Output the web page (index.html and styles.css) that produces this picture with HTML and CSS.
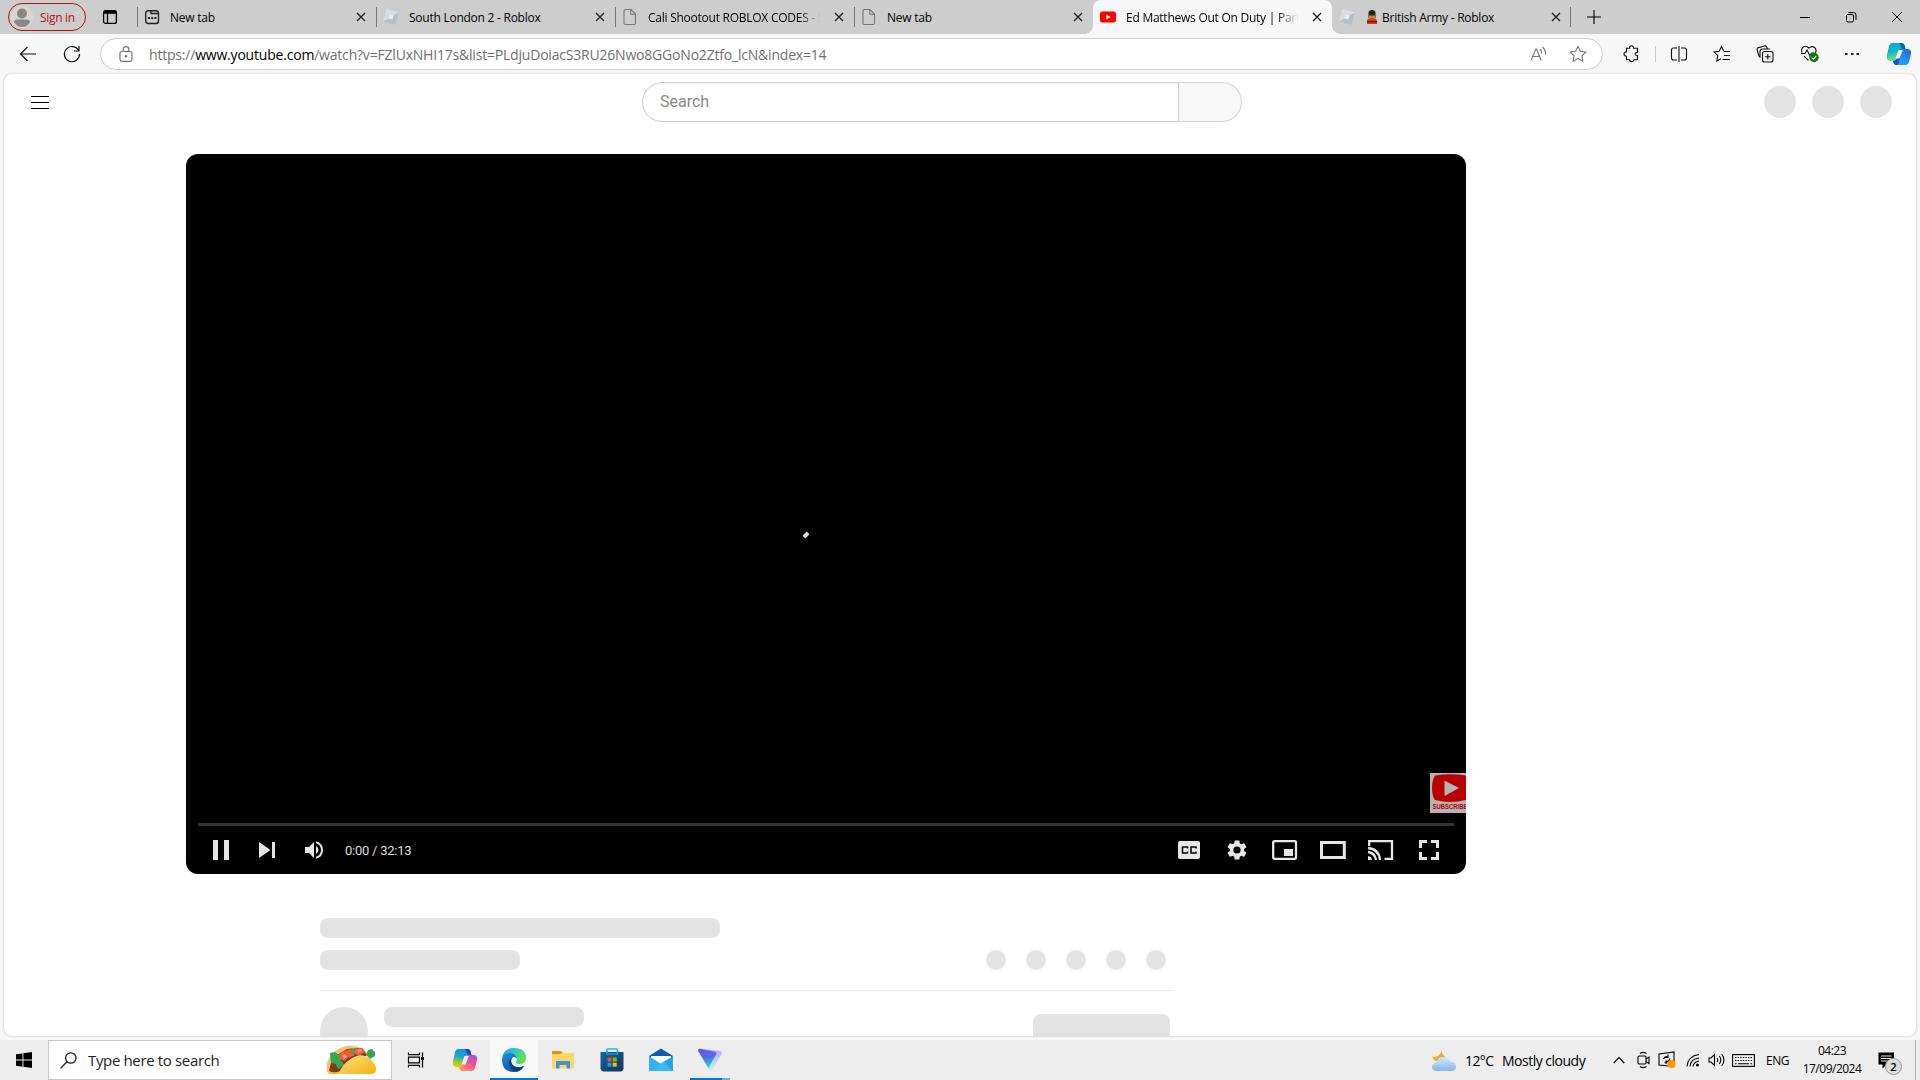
FILE: index.html
```html
<!DOCTYPE html>
<html lang="en">

<head>
    <meta charset="UTF-8">
    <title>Ed Matthews Out On Duty | Part 2</title>
    <link rel="stylesheet" href="styles.css">
</head>

<body>

    <!-- Tab strip -->
    <div class="tabstrip">
        <div class="signin">
            <svg width="22" height="22" viewBox="0 0 22 22"><circle cx="11" cy="11" r="11" fill="#d8d6d3"/><circle cx="11" cy="7.5" r="5" fill="#8b8783"/><path d="M3 16q0-2.500 3-2.500h10q3 0 3 2.500-2.500 5-8 5t-8-5z" fill="#8b8783"/></svg>
            <span>Sign in</span>
        </div>
        <div class="tab-actions">
            <svg width="16" height="16" viewBox="0 0 16 16" fill="none" stroke="#000" stroke-width="1.300"><rect x="1.600" y="1.600" width="12.800" height="12.800" rx="2"/><path d="M2 3.300h12" stroke-width="3"/><path d="M5.500 4v10"/></svg>
        </div>
        <div class="tab">
            <svg class="favicon" width="16" height="16" viewBox="0 0 16 16" fill="none" stroke="#222" stroke-width="1.400"><rect x="1.700" y="1.700" width="12.800" height="12.800" rx="2.500"/><path d="M7 2v2.500h7.500"/><path d="M4 9h2M7.200 9h2M10.400 9h2" stroke-width="2"/></svg>
            <span class="tab-title t-new">New tab</span>
            <svg class="close" width="10" height="10" viewBox="0 0 10 10"><path d="M1 1l8 8M9 1L1 9"/></svg>
        </div>
        <div class="tab">
            <svg class="favicon" width="16" height="16" viewBox="0 0 16 16"><path d="M3.500 0L16 3.500 12.500 16 0 12.500z" fill="#d9dde1"/><path d="M0 12.500L16 3.500 12.500 16z" fill="#b9bec5"/><path d="M6.500 5.600l4 1-1 4-4-1z" fill="#eceff1"/></svg>
            <span class="tab-title t-south">South London 2 - Roblox</span>
            <svg class="close" width="10" height="10" viewBox="0 0 10 10"><path d="M1 1l8 8M9 1L1 9"/></svg>
        </div>
        <div class="tab">
            <svg class="favicon" width="16" height="16" viewBox="0 0 16 16" fill="none" stroke="#777" stroke-width="1.100"><path d="M3.500.500H9L13.500 5v9q0 1.500-1.500 1.500H3.500Q2 15.500 2 14V2Q2 .500 3.500.500zM8.700.500V5.300h4.800"/></svg>
            <span class="tab-title faded t-cali">Cali Shootout ROBLOX CODES - South</span>
            <svg class="close" width="10" height="10" viewBox="0 0 10 10"><path d="M1 1l8 8M9 1L1 9"/></svg>
        </div>
        <div class="tab">
            <svg class="favicon" width="16" height="16" viewBox="0 0 16 16" fill="none" stroke="#777" stroke-width="1.100"><path d="M3.500.500H9L13.500 5v9q0 1.500-1.500 1.500H3.500Q2 15.500 2 14V2Q2 .500 3.500.500zM8.700.500V5.300h4.800"/></svg>
            <span class="tab-title t-new">New tab</span>
            <svg class="close" width="10" height="10" viewBox="0 0 10 10"><path d="M1 1l8 8M9 1L1 9"/></svg>
        </div>
        <div class="tab active">
            <svg class="favicon" width="16" height="16" viewBox="0 0 16 16"><rect y="2.500" width="16" height="11" rx="2.500" fill="#f00"/><path d="M6.300 5.500L10.700 8l-4.400 2.500z" fill="#fff"/></svg>
            <span class="tab-title faded t-ed">Ed Matthews Out On Duty | Part 2 - YouTube</span>
            <svg class="close" width="10" height="10" viewBox="0 0 10 10"><path d="M1 1l8 8M9 1L1 9"/></svg>
        </div>
        <div class="tab">
            <svg class="favicon" width="16" height="16" viewBox="0 0 16 16"><path d="M3.500 0L16 3.500 12.500 16 0 12.500z" fill="#d9dde1"/><path d="M0 12.500L16 3.500 12.500 16z" fill="#b9bec5"/><path d="M6.500 5.600l4 1-1 4-4-1z" fill="#eceff1"/></svg>
            <svg class="guard" width="12" height="14" viewBox="0 0 12 14"><path d="M2.500 8V3Q2.500 0 6 0t3.500 3v5z" fill="#222"/><path d="M3 5.500h6V8H3z" fill="#c58a2c"/><path d="M1 14v-3q0-3 5-3t5 3v3z" fill="#e0331c"/><path d="M1 11.300h10v1H1z" fill="#222"/></svg>
            <span class="tab-title t-army">British Army - Roblox</span>
            <svg class="close" width="10" height="10" viewBox="0 0 10 10"><path d="M1 1l8 8M9 1L1 9"/></svg>
        </div>
        <svg class="new-tab" width="14" height="14" viewBox="0 0 14 14"><path d="M7 0v14M0 7h14" stroke="#000" stroke-width="1.100"/></svg>
        <div class="window-buttons">
            <svg width="46" height="34" viewBox="0 0 46 34"><path d="M18 17.500h10"/></svg>
            <svg width="46" height="34" viewBox="0 0 46 34"><rect x="18.500" y="14.500" width="7" height="7.500" rx="1.500"/><path d="M20.500 12.500h5q2.500 0 2.500 2.500v5"/></svg>
            <svg width="46" height="34" viewBox="0 0 46 34"><path d="M18 12l10 10M28 12L18 22"/></svg>
        </div>
    </div>

    <!-- Toolbar -->
    <div class="toolbar">
        <svg class="back" width="18" height="16" viewBox="0 0 18 16"><path d="M17 8H1.500M8.500 1L1.500 8l7 7"/></svg>
        <svg class="reload" width="18" height="18" viewBox="0 0 18 18"><path d="M15.700 5.500A7.600 7.600 0 1 0 16.600 9M16 1v5h-5"/></svg>
        <div class="address">
            <svg width="14" height="16" viewBox="0 0 14 16" fill="none" stroke="#777" stroke-width="1.200"><rect x="1" y="5.500" width="12" height="9.800" rx="1.800"/><path d="M4.200 5.500V3.300q0-2.600 2.800-2.600t2.800 2.600v2.200"/><circle cx="7" cy="10.300" r=".7" fill="#666"/></svg>
            <span class="url"><span class="u1">https://</span><span class="host">www.youtube.com</span><span class="u2">/watch?v=FZlUxNHI17s&amp;list=PLdjuDoiacS3RU26Nwo8GGoNo2Ztfo_lcN&amp;index=14</span></span>
            <svg class="read" width="17" height="16" viewBox="0 0 17 16" fill="none" stroke="#777" stroke-width="1.100"><path d="M1 14.500L5.800 3h.6l4.800 11.500M2.800 10.500h6.600M10 3q1.800 1.600 1.500 4.500M12.500 1q3.500 3 3 7.500"/></svg>
            <svg class="star" width="18" height="18" viewBox="0 0 18 18" fill="none" stroke="#777" stroke-width="1.100" stroke-linejoin="round"><path d="M9 1.300l2.400 5 5.500.7-4 3.800 1 5.500L9 13.600l-4.900 2.700 1-5.500-4-3.800 5.500-.7z"/></svg>
        </div>
        <div class="tools">
            <svg width="18" height="18" viewBox="0 0 18 18"><path d="M4 3.500h3.200q-.2-2.500 1.900-2.500t1.900 2.500H15v4.200q-2.300-.2-2.300 1.500T15 10.800V15h-3.500q-.2 2-2.300 2T7 15H4v-3.500Q1.500 11.500 1.500 9.300T4 7.200z" transform="translate(.5 -.3)"/></svg>
            <div class="divider"></div>
            <svg width="18" height="18" viewBox="0 0 18 18"><path d="M7 3H3.500Q1.500 3 1.500 5v8q0 2 2 2H7M11 3h3.500q2 0 2 2v8q0 2-2 2H11M9 1v16"/></svg>
            <svg width="18" height="18" viewBox="0 0 18 18"><path d="M10.800 6.200L8.500 1.500l-2.300 4.700-5.200.8 3.800 3.600-1 5.400L8 13.700M11 6.500h6M11 10.500h6M9.500 14.500H17"/></svg>
            <svg width="18" height="18" viewBox="0 0 18 18"><rect x="6.500" y="6.500" width="10.500" height="10.500" rx="2"/><path d="M11.800 9v5.500M9 11.800h5.500M4.500 12.500Q3 12 2.700 10.500L1.200 5Q.8 3.200 2.500 2.600L8.500 1q1.800-.4 2.400 1.300l.6 2M4 12V6.500Q4 4 6.500 4H14"/></svg>
            <svg width="20" height="18" viewBox="0 0 20 18"><path d="M16.500 8Q18 4.500 15.500 2.500T10 3Q7 0 4.300 2T3 7.500M2 8.500h4l2-3.500 3 6 1.500-3h3M5 11l4.500 4.500"/><circle cx="15" cy="12.500" r="4.700" fill="#107c10" stroke="none"/><path d="M12.800 12.600l1.600 1.500 2.800-3" stroke="#fff"/></svg>
            <svg width="18" height="18" viewBox="0 0 18 18"><path d="M2 8h2.500v2H2zM8 8h2.500v2H8zM13.500 8H16v2h-2.500z" fill="#222" stroke="none"/></svg>
            <svg class="copilot" width="26" height="24" viewBox="0 0 26 24">
                <defs>
                    <linearGradient id="cp1" x1="0" y1="0" x2=".2" y2="1"><stop offset="0" stop-color="#0ea5dd"/><stop offset=".5" stop-color="#10b4c8"/><stop offset="1" stop-color="#74e08d"/></linearGradient>
                    <linearGradient id="cp2" x1="1" y1="0" x2="0" y2="1"><stop offset="0" stop-color="#1e6ad8"/><stop offset="1" stop-color="#2bb4fb"/></linearGradient>
                </defs>
                <path d="M6 1h9.500q2.500 0 3.300 3l.7 3H16q-2 0-2.700 2L11 16q-1 3-4 3H5q-5 0-4-6L3 4q.8-3 3-3z" fill="url(#cp1)"/>
                <path d="M13 1h2.500q2.500 0 3.300 3l.7 3H16z" fill="#0868a8"/>
                <path d="M20 23h-9.500q-2.500 0-3.300-3l-.3-1Q10 19 11 16l2.500-7Q14 7 16 7h5q5 0 4 5l-2 8q-.8 3-3 3z" fill="url(#cp2)"/>
                <path d="M7 19q3 0 4-3l2.500-8.300L16 7l-3 13q-.5 3-2.500 3t-3-2z" fill="#1253ce"/>
                <path d="M12.500 8h4.300l-3.300 8.500H9.500z" fill="#f7f7f7"/>
            </svg>
        </div>
    </div>

    <!-- Page -->
    <div class="page">
        <div class="masthead">
            <div class="menu"><i></i><i></i><i></i></div>
            <div class="searchbox">
                <div class="search-input">Search</div>
                <div class="search-button"></div>
            </div>
            <div class="masthead-end"><i></i><i></i><i></i></div>
        </div>

        <div class="player">
            <div class="spinner"></div>
            <svg class="watermark" width="36" height="40" viewBox="0 0 36 40"><rect width="40" height="40" fill="#b4b4b4"/><path d="M5 2.500Q20 0 36 2.500V27Q20 31 5 27 2 23 2 15T5 2.500z" fill="#b80000"/><path d="M14.500 7.500L29 15l-14.500 8z" fill="#b4b4b4"/><text x="2.500" y="36" textLength="35" lengthAdjust="spacingAndGlyphs">SUBSCRIBE</text></svg>
            <div class="controls">
                <div class="progress"></div>
                <div class="buttons">
                    <svg width="46" height="36" viewBox="0 0 46 36"><path d="M15 8h5v20h-5zM26 8h5v20h-5z"/></svg>
                    <svg width="46" height="36" viewBox="0 0 46 36"><path d="M15 10v16l11.500-8zM28 10h3v16h-3z"/></svg>
                    <svg width="46" height="36" viewBox="0 0 46 36"><path d="M15 15v6h4l5 5V10l-5 5zM26 14v8q2.500-1.300 2.500-4T26 14zM26 9.200v2.100q5 1.700 5 6.700t-5 6.700v2.100q7-2 7-8.800t-7-8.800z"/></svg>
                    <span class="time">0:00 / 32:13</span>
                    <div class="gap"></div>
                    <svg width="48" height="36" viewBox="0 0 48 36"><path d="M15 9h18q2 0 2 2v14q0 2-2 2H15q-2 0-2-2V11q0-2 2-2z"/><path d="M22.500 16.500v-1.600h-5v6.200h5v-1.600M31 16.500v-1.600h-5v6.200h5v-1.600" fill="none" stroke="#000" stroke-width="1.500"/></svg>
                    <svg width="48" height="36" viewBox="0 0 48 36"><g transform="translate(12 6)"><path d="M19.140 12.940c.04-.3.060-.61.060-.94s-.02-.64-.07-.94l2.030-1.580c.18-.14.230-.41.120-.61l-1.920-3.320c-.12-.22-.37-.29-.59-.22l-2.390.96c-.5-.38-1.030-.7-1.620-.94L14.400 2.810c-.04-.24-.24-.41-.48-.41h-3.840c-.24 0-.43.17-.47.41l-.36 2.540c-.59.24-1.130.57-1.620.94l-2.390-.96c-.22-.08-.47 0-.59.22L2.740 8.870c-.12.210-.08.470.12.610l2.030 1.580c-.05.3-.09.630-.09.940s.02.640.070.940l-2.030 1.580c-.18.140-.23.410-.12.610l1.920 3.320c.12.220.37.290.59.220l2.390-.96c.5.380 1.030.7 1.620.94l.36 2.540c.05.240.24.410.48.410h3.840c.24 0 .44-.17.470-.41l.36-2.540c.59-.24 1.130-.56 1.620-.94l2.390.96c.22.080.47 0 .59-.22l1.920-3.320c.12-.22.070-.47-.12-.61zM12 15.600A3.600 3.600 0 1 1 12 8.400a3.600 3.600 0 0 1 0 7.200z"/></g></svg>
                    <svg width="48" height="36" viewBox="0 0 48 36"><rect x="12.200" y="9.200" width="22.800" height="17.600" rx="1.500" class="line"/><path d="M23 17h9v7h-9z"/></svg>
                    <svg width="48" height="36" viewBox="0 0 48 36"><path d="M12.500 10.500h22.800v15H12.500z" class="line thick"/></svg>
                    <svg width="48" height="36" viewBox="0 0 48 36"><path d="M12.200 14V9.200H35v17.600h-7.500M11 16q11 1 12 12M11 20q7 1 8 8" class="line"/><path d="M11 24q3.700.5 4 4h-4z"/></svg>
                    <svg width="48" height="36" viewBox="0 0 48 36"><path d="M15.500 16V9.500H22M26 9.500h6.500V16M32.500 20v6.500H26M22 26.500h-6.500V20" class="line thick"/></svg>
                </div>
            </div>
        </div>

        <div class="below">
            <div class="bar wide"></div>
            <div class="row">
                <div class="bar"></div>
                <div class="dots"><i></i><i></i><i></i><i></i><i></i></div>
            </div>
            <div class="owner">
                <div class="avatar"></div>
                <div class="bar"></div>
                <div class="subscribe"></div>
            </div>
        </div>
    </div>

    <!-- Taskbar -->
    <div class="taskbar">
        <div class="start">
            <svg width="16" height="16" viewBox="0 0 16 16"><path d="M0 2.300L6.500 1.400v6.200H0zM7.400 1.200L16 0v7.600H7.400zM0 8.500h6.500v6.200L0 13.700zM7.400 8.500H16V16l-8.600-1.200z"/></svg>
        </div>
        <div class="tasksearch">
            <svg width="17" height="17" viewBox="0 0 17 17" fill="none" stroke="#222" stroke-width="1.300"><circle cx="10.800" cy="6" r="5.200"/><path d="M7 9.800L.6 16.300"/></svg>
            <span>Type here to search</span>
            <svg class="taco" width="52" height="30" viewBox="0 0 52 30">
                <defs><linearGradient id="shell" x1="0" y1="0" x2="1" y2="1"><stop offset="0" stop-color="#ffdf83"/><stop offset="1" stop-color="#f5b210"/></linearGradient></defs>
                <path d="M2 27Q0 14 10 6 24-4 39 4l4 6-30 18H6q-3 0-4-1z" fill="#f0c477"/>
                <path d="M4 26l3-13L22 4l15-1 5 7-25 16q-7 3-13 0z" fill="#7b4018"/>
                <path d="M5 8l5-1 4 3 3 4-5 5-6-1zM10 17l7-1 2 4-6 4zM25 3l6 2-2 6-6-1zM43 5l4-1 3 3v4l-5 3-4-4z" fill="#34a853"/>
                <path d="M14 9l6-4 5 5-5 6-5-2zM21 6l4-2 4 6-5 3zM30 4l7-1 3 4-6 4-4-2z" fill="#ee5b3d"/>
                <path d="M17 11l3-2 2 3-3 2zM32 5l4-1 1 2-4 2z" fill="#ff9873"/>
                <path d="M14 29Q16 20 27 13q10-6 18 1 7 6 6 12-1 3-5 3z" fill="url(#shell)"/>
                <path d="M3 27q8 2 12-1l-1 3H6q-3 0-3-2z" fill="#f7bc30"/>
            </svg>
        </div>
        <div class="app">
            <svg width="18" height="16" viewBox="0 0 18 16" fill="none" stroke="#000" stroke-width="1.200"><path d="M1.500.5v2.200h11V.5M1.500 15.500v-2.200h11v2.200M1.500 5.200h11v5.600h-11zM15.500.5v15"/><path d="M14 5h3v3h-3z" fill="#000" stroke="none"/></svg>
        </div>
        <div class="app">
            <svg width="26" height="24" viewBox="0 0 26 24">
                <defs>
                    <linearGradient id="cc1" x1=".5" y1="0" x2=".3" y2="1"><stop offset="0" stop-color="#1690dd"/><stop offset=".45" stop-color="#21a8c8"/><stop offset=".7" stop-color="#8cc63e"/><stop offset="1" stop-color="#ffc400"/></linearGradient>
                    <linearGradient id="cc2" x1="1" y1="0" x2=".2" y2="1"><stop offset="0" stop-color="#a24de0"/><stop offset=".5" stop-color="#ee5594"/><stop offset="1" stop-color="#ff9c55"/></linearGradient>
                </defs>
                <path d="M6 1h9.500q2.500 0 3.300 3l.7 3H16q-2 0-2.700 2L11 16q-1 3-4 3H5q-5 0-4-6L3 4q.8-3 3-3z" fill="url(#cc1)"/>
                <path d="M13 1h2.500q2.500 0 3.300 3l.7 3H16z" fill="#2146c4"/>
                <path d="M20 23h-9.500q-2.500 0-3.300-3l-.3-1Q10 19 11 16l2.500-7Q14 7 16 7h5q5 0 4 5l-2 8q-.8 3-3 3z" fill="url(#cc2)"/>
                <path d="M12.500 8h4.300l-3.300 8.500H9.500z" fill="#eee"/>
            </svg>
        </div>
        <div class="app current">
            <svg width="24" height="24" viewBox="0 0 24 24">
                <defs>
                    <linearGradient id="ed1" x1="0" y1="0" x2="1" y2=".3"><stop offset="0" stop-color="#239fdf"/><stop offset=".5" stop-color="#2bc3d2"/><stop offset="1" stop-color="#67df55"/></linearGradient>
                    <linearGradient id="ed2" x1="0" y1="0" x2=".7" y2="1"><stop offset="0" stop-color="#1c91de"/><stop offset="1" stop-color="#0b4f9c"/></linearGradient>
                </defs>
                <path d="M0 12Q0 0 12 0t12 10q0 6-6.500 6-4 0-4-2 1.500-1 1.300-3Q14 8 10 8 5 7 0 12z" fill="url(#ed1)"/>
                <path d="M0 12Q1 5 7.500 5q6 0 7.300 5.500Q12.500 8 10 10q-2.500 3 .5 7 4 4 11.500 1-3.500 6-10 6Q0 24 0 12z" fill="url(#ed2)"/>
                <path d="M10 10q-4 2-3 7 2 6 8.500 6.500 4-1 6.500-5.500-7 3-11.300-1Q8 13 10 10z" fill="#0a437f"/>
            </svg>
        </div>
        <div class="app">
            <svg width="22" height="20" viewBox="0 0 22 20"><path d="M0 1h9l2 2h11v15.500H0z" fill="#ffd767"/><path d="M0 1h9l1.500 1.500L8.500 4H0z" fill="#d89a12"/><path d="M4 18.500V12q0-1 1-1h12q1 0 1 1v6.500h-3.500V15h-7v3.500z" fill="#3b93dc"/></svg>
        </div>
        <div class="app">
            <svg width="24" height="24" viewBox="0 0 24 24"><defs><linearGradient id="st" x1="0" y1="0" x2="1" y2="1"><stop offset="0" stop-color="#14689f"/><stop offset="1" stop-color="#183059"/></linearGradient></defs><path d="M7 6V2q0-1 1-1h8.500q1 0 1 1v4" fill="none" stroke="#22b4ee" stroke-width="1.700"/><path d="M.5 4h23v16q0 3.500-3.500 3.500H4Q.5 23.500.5 20z" fill="url(#st)"/><path d="M7 3v3h10.500V3" fill="none" stroke="#22b4ee" stroke-width="1.200"/><path d="M7.500 9.500h4v4h-4z" fill="#f25022"/><path d="M12.700 9.500h4v4h-4z" fill="#7fba00"/><path d="M7.500 14.700h4v4h-4z" fill="#00a4ef"/><path d="M12.700 14.700h4v4h-4z" fill="#ffb900"/></svg>
        </div>
        <div class="app">
            <svg width="24" height="24" viewBox="0 0 24 24"><path d="M0 8l12-7.500L24 8v15H0z" fill="#0f5ea8"/><path d="M2 8h20v9H2z" fill="#fff"/><path d="M0 8l12 8L0 23z" fill="#33b3ec"/><path d="M24 8v15H0z" fill="#26a5e5"/><path d="M0 23l15-9.300L24 23z" fill="#35baf1"/></svg>
        </div>
        <div class="app open">
            <svg width="24" height="24" viewBox="0 0 24 24"><defs><linearGradient id="pr" x1=".2" y1="0" x2=".5" y2="1"><stop offset="0" stop-color="#6a4df3"/><stop offset=".5" stop-color="#5470df"/><stop offset="1" stop-color="#22ddc4"/></linearGradient><linearGradient id="pr2" x1="0" y1="0" x2="0" y2="1"><stop offset="0" stop-color="#b9a7ff"/><stop offset="1" stop-color="#bff5e7"/></linearGradient></defs><path d="M2 .5L22 3q3 .6 1.500 3.500L14 22q-1.500 2-3 0L0 2.500Q0 .3 2 .5z" fill="url(#pr2)"/><path d="M1 .8l16 3q2.500.7 1 3L10.500 20 0 2.800Q0 1 1 .8z" fill="url(#pr)"/></svg>
        </div>
        <div class="tray">
            <svg class="weather" width="26" height="26" viewBox="0 0 26 26"><defs><linearGradient id="cl" x1="0" y1="0" x2="0" y2="1"><stop offset="0" stop-color="#d4e8fc"/><stop offset="1" stop-color="#88b4ef"/></linearGradient></defs><path d="M11 1q-1 4 1.500 7t3.500 6H4q-2-2-3-5 3 2 6.500-.5T11 1z" fill="#f8a92a"/><path d="M6 24q-5 0-5-4t5-5q1-5 6.500-5 5 0 6.500 4.500 6 .5 6 5T20 24z" fill="url(#cl)"/></svg>
            <span class="temp">12°C</span>
            <span class="sky">Mostly cloudy</span>
            <svg class="chev" width="12" height="8" viewBox="0 0 12 8"><path d="M.7 7L6 1.500 11.300 7"/></svg>
            <svg class="meet" width="13" height="18" viewBox="0 0 13 18"><rect x="1" y="5" width="8" height="8" rx="1.200"/><path d="M9 8l3-2v6.500L9 10.500M3 2.500Q6 .2 9.500 2.500M3 15.500q3 2.300 6.500 0"/></svg>
            <svg class="sync" width="18" height="18" viewBox="0 0 18 18"><path d="M1 3l15-2v14.500L1 14zM5.500 8q1-3 5-2.500M10 3.500v3H7M11.500 7.500q0 4-5 4M8 13v-3h3"/><circle cx="13.500" cy="13" r="4" fill="#ff9500" stroke="none"/></svg>
            <svg class="wifi" width="14" height="14" viewBox="0 0 14 14"><path d="M1 13.500Q2 3 13 1.500M4 13.500Q4.500 6 13 5M7 13.500Q7.500 9 13 8"/><circle cx="11.500" cy="12" r="1.500" fill="#000" stroke="none"/></svg>
            <svg class="vol" width="17" height="14" viewBox="0 0 17 14"><path d="M1 5v4h2l3.500 3.500v-11L3 5zM9 5q1.500 2 0 4M11.300 3q3 4 0 8M13.700 1.200q4.500 5.800 0 11.600"/></svg>
            <svg class="kbd" width="23" height="13" viewBox="0 0 23 13"><rect x=".6" y=".6" width="21.800" height="11.800"/><path d="M3 3.500h17M3 6.500h17" stroke-dasharray="1.400 1.200"/><path d="M3 9.700h1.500M6 9.700h11M18.500 9.700H20"/></svg>
            <span class="lang">ENG</span>
            <div class="clock"><div>04:23</div><div class="date">17/09/2024</div></div>
            <div class="notes">
                <svg width="17" height="17" viewBox="0 0 17 17"><path d="M.5.500h15.500v12H9L4.500 16.500v-4h-4z" fill="#000" stroke="none"/><path d="M3 4h10.500M3 6.500h10.500M3 9h7" stroke="#eee"/></svg>
                <span class="count">2</span>
            </div>
            <div class="peek"></div>
        </div>
    </div>

</body>

</html>
```
FILE: styles.css
```css
* {
    margin: 0;
    padding: 0;
    box-sizing: border-box;
}

body {
    width: 1920px;
    height: 1080px;
    overflow: hidden;
    background: #f7f7f7;
    font-family: 'Open Sans', 'Noto Sans', sans-serif;
    font-size: 12px;
    color: #000;
    display: flex;
    flex-direction: column;
}

svg {
    display: block;
    flex: none;
}

span {
    white-space: nowrap;
}

/* Tab strip */
.tabstrip {
    height: 34px;
    background: #cdcdcd;
    display: flex;
    align-items: center;
    padding-left: 8px;
}

.signin {
    width: 78px;
    height: 28px;
    border: 1px solid #b0141a;
    border-radius: 14px;
    display: flex;
    align-items: center;
    gap: 7px;
    padding-left: 2px;
    color: #b0141a;
    letter-spacing: -0.3px;
}

.tab-actions {
    width: 51px;
    padding-left: 16px;
}

.tab {
    width: 239px;
    height: 34px;
    display: flex;
    align-items: center;
    padding: 0 10px 0 7px;
    background: linear-gradient(#777, #777) left 0 top 7px / 1px 20px no-repeat;
}

.tab:nth-last-child(3) {
    background: linear-gradient(#777, #777) right 0 top 7px / 1px 20px no-repeat;
}

.tab.active {
    background: #f7f7f7;
    border-radius: 8px 8px 0 0;
    position: relative;
}

.tab.active::before,
.tab.active::after {
    content: '';
    position: absolute;
    bottom: 0;
    width: 8px;
    height: 8px;
}

.tab.active::before {
    left: -8px;
    background: radial-gradient(circle at 0 0, transparent 7.5px, #f7f7f7 8px);
}

.tab.active::after {
    right: -8px;
    background: radial-gradient(circle at 100% 0, transparent 7.5px, #f7f7f7 8px);
}

.favicon {
    margin-right: 10px;
}

.guard {
    margin: 0 4px 0 1px;
}

.tab-title {
    flex: 1;
    overflow: hidden;
    letter-spacing: -0.25px;
}

.faded {
    -webkit-mask-image: linear-gradient(90deg, #000 86%, transparent 98%);
    mask-image: linear-gradient(90deg, #000 86%, transparent 98%);
}

.close {
    margin-left: 10px;
    stroke: #222;
    stroke-width: 1.4;
}

.new-tab {
    margin-left: 16px;
}

.window-buttons {
    margin-left: auto;
    display: flex;
}

.window-buttons svg {
    fill: none;
    stroke: #000;
}

/* Toolbar */
.toolbar {
    height: 40px;
    display: flex;
    align-items: center;
    padding-left: 19px;
}

.back,
.reload {
    fill: none;
    stroke: #111;
    stroke-width: 1.2;
}

.reload {
    margin: 0 19px 0 26px;
}

.address {
    width: 1503px;
    height: 32px;
    border: 1px solid #cfcfcf;
    border-radius: 16px;
    background: #fff;
    display: flex;
    align-items: center;
    padding: 0 15px 0 18px;
}

.url {
    flex: 1;
    margin-left: 16px;
    font-size: 14px;
    color: #707070;
    letter-spacing: -0.2px;
}

.host {
    color: #000;
}

.star {
    margin-left: 22px;
}

.tools {
    flex: 1;
    display: flex;
    align-items: center;
    padding: 0 8px 0 19px;
    justify-content: space-between;
}

.tools svg {
    fill: none;
    stroke: #111;
    stroke-width: 1.1;
}

.tools .copilot {
    stroke: none;
}

.divider {
    width: 1px;
    height: 16px;
    margin: 0 -10px;
    background: #c9c9c9;
}

/* Page */
.page {
    height: 962px;
    margin: 0 4px 4px;
    background: #fff;
    border-radius: 8px;
    box-shadow: 0 0 2px rgba(0, 0, 0, 0.3);
    overflow: hidden;
}

.masthead {
    height: 56px;
    display: flex;
    align-items: center;
    padding: 0 24px 0 27px;
}

.menu {
    width: 18px;
    display: flex;
    flex-direction: column;
    gap: 5px;
}

.menu i {
    height: 1px;
    background: #000;
}

.searchbox {
    width: 600px;
    height: 40px;
    margin-left: 593px;
    display: flex;
    font: 16px Roboto, sans-serif;
    color: #888;
}

.search-input {
    width: 537px;
    border: 1px solid #ccc;
    border-radius: 20px 0 0 20px;
    padding-left: 17px;
    line-height: 37px;
    box-shadow: inset 0 1px 2px #eee;
}

.search-button {
    flex: 1;
    border: 1px solid #d3d3d3;
    border-left: 0;
    border-radius: 0 20px 20px 0;
    background: #f8f8f8;
}

.masthead-end {
    margin-left: auto;
    display: flex;
    gap: 16px;
}

.masthead-end i {
    width: 32px;
    height: 32px;
    border-radius: 50%;
    background: #e3e3e3;
}

.player {
    width: 1280px;
    height: 720px;
    margin: 24px 0 0 182px;
    background: #000;
    border-radius: 12px;
    overflow: hidden;
    position: relative;
    display: flex;
    align-items: flex-end;
}

.spinner {
    position: absolute;
    left: 617px;
    top: 379px;
    width: 6px;
    height: 4px;
    border-radius: 1px;
    background: #ddd;
    transform: rotate(-45deg);
}

.watermark {
    position: absolute;
    right: 0;
    top: 619px;
}

.watermark text {
    font: bold 6.5px 'Liberation Sans', sans-serif;
    fill: #b80000;
}

.controls {
    width: 100%;
    padding: 0 12px;
}

.progress {
    height: 3px;
    background: #333;
}

.buttons {
    height: 48px;
    display: flex;
    align-items: center;
    padding-right: 1px;
}

.buttons svg {
    fill: #e6e6e6;
}

.buttons .line {
    fill: none;
    stroke: #e6e6e6;
    stroke-width: 2.3;
}

.buttons .thick {
    stroke-width: 3;
}

.time {
    margin-left: 9px;
    font: 13px Roboto, sans-serif;
    color: #ddd;
    letter-spacing: -0.25px;
}

.gap {
    flex: 1;
}

.below {
    width: 854px;
    margin: 44px 0 0 316px;
}

.bar {
    width: 200px;
    height: 20px;
    border-radius: 8px;
    background: #e3e3e3;
}

.bar.wide {
    width: 400px;
}

.row {
    display: flex;
    justify-content: space-between;
    margin-top: 12px;
    padding: 0 8px 20px 0;
    border-bottom: 1px solid #ebebeb;
}

.dots {
    display: flex;
    gap: 20px;
}

.dots i {
    width: 20px;
    height: 20px;
    border-radius: 50%;
    background: #e3e3e3;
}

.owner {
    display: flex;
    margin-top: 16px;
}

.avatar {
    width: 48px;
    height: 48px;
    margin-right: 16px;
    border-radius: 50%;
    background: #e3e3e3;
}

.subscribe {
    width: 137px;
    height: 36px;
    margin: 7px 4px 0 auto;
    border-radius: 8px;
    background: #e3e3e3;
}

/* Taskbar */
.taskbar {
    height: 40px;
    background: #ededed;
    display: flex;
}

.start {
    width: 48px;
    display: flex;
    align-items: center;
    justify-content: center;
}

.tasksearch {
    width: 344px;
    border: 1px solid #c6c6c6;
    background: #fff;
    display: flex;
    align-items: center;
    padding: 0 14px 0 11px;
    font-size: 15px;
    color: #222;
}

.tasksearch span {
    flex: 1;
    margin-left: 11px;
    letter-spacing: -0.35px;
}

.app {
    width: 48px;
    height: 40px;
    margin-right: 1px;
    display: flex;
    align-items: center;
    justify-content: center;
}

.current {
    background: #f8f8f8;
    border-bottom: 2px solid #0078d7;
    padding-top: 2px;
}

.open {
    width: 40px;
    margin-left: 4px;
    background: linear-gradient(90deg, #0078d7 32px, #69b0e8 32px) bottom / 100% 2px no-repeat;
}

.tray {
    margin-left: auto;
    display: flex;
    align-items: center;
    font-size: 14px;
}

.tray svg {
    fill: none;
    stroke: #000;
    stroke-width: 1.1;
}

.tray .weather {
    stroke: none;
}

.temp {
    width: 29px;
    margin-left: 8px;
    letter-spacing: -0.6px;
}

.sky {
    width: 87px;
    margin-left: 8px;
    letter-spacing: -0.5px;
}

.chev {
    margin-left: 24px;
}

.meet {
    margin-left: 12px;
}

.sync {
    margin-left: 8px;
}

.wifi {
    margin-left: 10px;
}

.vol {
    margin-left: 8px;
}

.kbd {
    margin-left: 7px;
}

.lang {
    width: 24px;
    margin-left: 11px;
    font-size: 12px;
    letter-spacing: -0.5px;
}

.clock {
    width: 60px;
    margin-left: 12px;
    font-size: 12px;
    line-height: 18px;
    text-align: center;
    letter-spacing: -0.5px;
}

.notes {
    width: 37px;
    margin-left: 16px;
    position: relative;
}

.count {
    position: absolute;
    left: 7px;
    top: 6px;
    width: 17px;
    height: 17px;
    border: 1px solid #999;
    border-radius: 50%;
    background: #dcdcdc;
    font-size: 11px;
    font-weight: 600;
    line-height: 15px;
    text-align: center;
}

.peek {
    width: 5px;
    height: 40px;
    border-left: 1px solid #b5b5b5;
}
```
